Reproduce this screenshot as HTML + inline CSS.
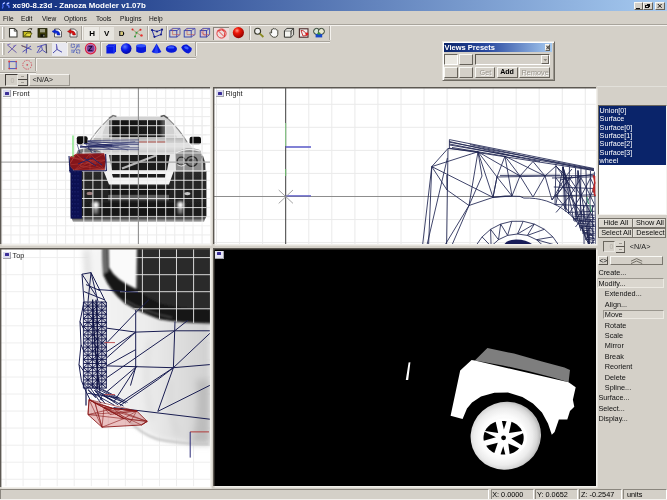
<!DOCTYPE html>
<html>
<head>
<meta charset="utf-8">
<title>Zanoza Modeler</title>
<style>
html,body{margin:0;padding:0;}
body{width:667px;height:500px;overflow:hidden;background:#d4d0c8;font-family:"Liberation Sans",sans-serif;font-size:7.4px;color:#000;position:relative;}
.abs{position:absolute;}
#title{left:0;top:0;width:667px;height:11.4px;background:linear-gradient(to right,#0d2a7c 0%,#a6caf0 100%);}
#title .t{left:12.4px;top:0.9px;color:#fff;font-weight:bold;font-size:7.9px;line-height:10px;white-space:nowrap;filter:blur(0.3px);}
#menu span{position:absolute;top:14px;line-height:9px;font-size:7.5px;color:#111;filter:blur(0.25px);transform:scaleX(0.88);transform-origin:0 0;white-space:nowrap;}
.vp{background:#fff;overflow:hidden;box-shadow:1.6px 1.6px 0 #f1efea;}
.vp:after{content:"";position:absolute;left:0;top:0;right:0;bottom:0;box-shadow:inset 1.4px 1.4px 0 #5c5852;pointer-events:none;}
.vplabel{position:absolute;left:12.6px;top:2.2px;font-size:7.3px;line-height:9px;color:#222;filter:blur(0.25px);}
.vpicon{position:absolute;left:3px;top:3.2px;width:8px;height:7px;box-sizing:border-box;background:#dcdcee;border-right:1px solid #a4a4ac;border-bottom:1px solid #a4a4ac;}
.vpicon:after{content:"";position:absolute;left:2.2px;top:1.8px;width:4px;height:2.6px;background:#3a2e98;border-radius:0.5px;}

.grip{width:1px;background:#fff;box-shadow:1.5px 0 0 #a8a49c;}
.vsep{width:1px;background:#a8a49c;box-shadow:1px 0 0 #f4f2ee;}

.sunk{box-sizing:border-box;border:1px solid;border-color:#6e6a64 #fff #fff #6e6a64;}
.rais{box-sizing:border-box;border:1px solid;border-color:#fff #5a5650 #5a5650 #fff;background:#d4d0c8;}
.btn{box-sizing:border-box;border:1px solid;border-color:#f8f8f4 #66625a #66625a #f8f8f4;background:#d4d0c8;text-align:center;font-size:7.2px;line-height:7px;white-space:nowrap;overflow:hidden;}
.btn2{box-sizing:border-box;border:1px solid #77736b;background:#dbd7cf;box-shadow:inset 0.6px 0.6px 0 #eceae4;}
.tx{position:absolute;white-space:nowrap;font-size:7.3px;line-height:9px;filter:blur(0.25px);}
</style>
</head>
<body>
<!-- title bar -->
<div id="title" class="abs"><div class="t abs">xc90-8.z3d - Zanoza Modeler v1.07b</div></div>
<!-- menu -->
<div id="menu">
<span style="left:3.4px">File</span><span style="left:21.4px">Edit</span><span style="left:41.8px">View</span><span style="left:63.6px">Options</span><span style="left:96px">Tools</span><span style="left:119.6px">Plugins</span><span style="left:148.8px">Help</span>
</div>


<!-- separators / etched lines -->
<div class="abs" style="left:0;top:24px;width:667px;height:1px;background:#a8a49c;"></div>
<div class="abs" style="left:0;top:25px;width:667px;height:1px;background:#f4f2ee;"></div>
<div class="abs" style="left:0;top:40.5px;width:330px;height:1px;background:#a8a49c;"></div>
<div class="abs" style="left:0;top:41.5px;width:330px;height:1px;background:#f4f2ee;"></div>
<div class="abs" style="left:0;top:56.5px;width:196px;height:1px;background:#a8a49c;"></div>
<div class="abs" style="left:0;top:57.5px;width:196px;height:1px;background:#f4f2ee;"></div>
<div class="abs" style="left:0;top:71.5px;width:36px;height:1px;background:#a8a49c;"></div>
<div class="abs" style="left:0;top:72.5px;width:36px;height:1px;background:#f4f2ee;"></div>
<!-- grips -->
<div class="grip abs" style="left:1.5px;top:27px;height:12px;"></div>
<div class="grip abs" style="left:1.5px;top:43px;height:12px;"></div>
<div class="grip abs" style="left:1.5px;top:59px;height:11px;"></div>
<!-- vertical toolbar separators row1 -->
<div class="vsep abs" style="left:81px;top:26px;height:14px;"></div>
<div class="vsep abs" style="left:147px;top:26px;height:14px;"></div>
<div class="vsep abs" style="left:166px;top:26px;height:14px;"></div>
<div class="vsep abs" style="left:248.5px;top:26px;height:14px;"></div>
<div class="vsep abs" style="left:328.5px;top:26px;height:14px;"></div>
<div class="vsep abs" style="left:66px;top:42px;height:14px;"></div>
<div class="vsep abs" style="left:100px;top:42px;height:14px;"></div>
<div class="vsep abs" style="left:195px;top:42px;height:14px;"></div>
<div class="vsep abs" style="left:35px;top:58px;height:13px;"></div>
<!-- pressed button backgrounds -->
<div class="abs" style="left:84px;top:26.5px;width:15px;height:13.5px;background:#ebe9e4;"></div>
<div class="abs" style="left:99.5px;top:26.5px;width:14.5px;height:13.5px;background:#e6e4de;"></div>
<div class="abs" style="left:213px;top:26.5px;width:16px;height:13.5px;background:#ecdcdc;border-left:1px solid #8a867e;border-top:1px solid #8a867e;box-sizing:border-box;"></div>
<div class="abs" style="left:52px;top:43px;width:15px;height:12.5px;background:#e8e8f0;"></div>


<svg class="abs" style="left:0;top:0;filter:blur(0.35px);" width="667" height="90" viewBox="0 0 667 90">
<defs>
<radialGradient id="rb" cx="0.38" cy="0.32" r="0.7"><stop offset="0" stop-color="#ff9a8a"/><stop offset="0.35" stop-color="#f01808"/><stop offset="1" stop-color="#900000"/></radialGradient>
<radialGradient id="bb" cx="0.38" cy="0.32" r="0.7"><stop offset="0" stop-color="#5a78ff"/><stop offset="0.5" stop-color="#0818e8"/><stop offset="1" stop-color="#0408a0"/></radialGradient>
</defs>
<!-- app icon -->
<g fill="none" stroke-linecap="round"><path d="M4.6 3 Q2.4 3.4 2.8 5.2 Q3.6 6.4 2.4 8" stroke="#4a6cf0" stroke-width="1.3"/><path d="M9 3 Q6.6 3 7 4.8 Q9.4 5.6 9 7.4" stroke="#5a7cf8" stroke-width="1.4"/><path d="M4.4 3 L3.4 3.6 M8.6 3.2 L7.4 3.8" stroke="#e8ecff" stroke-width="1"/></g>
<!-- new -->
<path d="M9.5 28.5 H14.5 L17 31 V37 H9.5 Z" fill="#fff" stroke="#3a3a34" stroke-width="1.1"/>
<path d="M14.3 28.7 V31.2 H16.8" fill="none" stroke="#3a3a34" stroke-width="0.8"/>
<!-- open -->
<path d="M23.2 31.5 H30.5 V37 H23.2 Z" fill="#c8c020" stroke="#3a3a10" stroke-width="1.1"/>
<path d="M24.5 36 L27 33 H32 L30 36.6 Z" fill="#e8e040" stroke="#4a4a10" stroke-width="0.8"/>
<path d="M27.5 30 Q29.5 28 31.5 28.6 M31.8 28.2 L31.2 30.2" fill="none" stroke="#3a3a30" stroke-width="0.9"/>
<!-- save -->
<rect x="38" y="28.6" width="9" height="8.6" fill="#3a3a08" stroke="#1c1c04" stroke-width="0.8"/>
<rect x="40" y="29" width="5" height="3.4" fill="#9a9a80"/>
<rect x="40.4" y="34.2" width="4.4" height="3" fill="#101008"/>
<rect x="43.4" y="34.8" width="1" height="1.8" fill="#b0b0a0"/>
<!-- import (blue) -->
<path d="M54.5 29 H59 L61.5 31.5 V37 H54.5 Z" fill="#f4f4f4" stroke="#505050" stroke-width="0.9"/>
<path d="M52 31.4 L55.5 29.6 L55.5 30.8 Q59.5 30.6 60 35 L57.2 35 Q57 32.6 55.5 32.6 L55.5 33.6 Z" fill="#0828d8" stroke="#0818a0" stroke-width="0.5"/>
<!-- export (red) -->
<path d="M70 29 H74.5 L77 31.5 V37 H70 Z" fill="#f4f4f4" stroke="#505050" stroke-width="0.9"/>
<path d="M67.5 31.4 L71 29.6 L71 30.8 Q75 30.6 75.5 35 L72.8 35 Q72.6 32.6 71 32.6 L71 33.6 Z" fill="#d81010" stroke="#900808" stroke-width="0.5"/>
<!-- H V D -->
<text x="89.2" y="36.2" font-family="Liberation Sans" font-weight="bold" font-size="8" fill="#000">H</text>
<text x="104" y="36.2" font-family="Liberation Sans" font-weight="bold" font-size="8" fill="#000">V</text>
<text x="118.8" y="36.2" font-family="Liberation Sans" font-weight="bold" font-size="8" fill="#000">D</text><path d="M120.6 31.6 V35 H122.4 Q123.4 33.4 122.4 31.6 Z" fill="#d8c870"/>

<!-- vertices icon -->
<g fill="none" stroke-width="0.9"><path d="M132.5 29.5 L136.5 32.5 L140.5 29.5 M136.5 32.5 L135 37 M136.5 32.5 L141.5 36" stroke="#a89068"/>
<circle cx="132.5" cy="29.5" r="1" fill="#e02020" stroke="none"/><circle cx="140.5" cy="29.8" r="1" fill="#e02020" stroke="none"/><circle cx="136.5" cy="32.8" r="1" fill="#30a040" stroke="none"/><circle cx="135" cy="36.6" r="1" fill="#30a040" stroke="none"/><circle cx="141.5" cy="35.4" r="1.2" fill="#e83030" stroke="none"/></g>
<!-- polygon icon -->
<g fill="none" stroke="#2830a8" stroke-width="1"><path d="M152 30 L157 31.5 L162 29.5 L161 34.5 L154.5 37 Z"/></g>
<g fill="#101880"><circle cx="152" cy="30" r="1.1"/><circle cx="157" cy="31.5" r="1"/><circle cx="162" cy="29.6" r="1.1"/><circle cx="161" cy="34.5" r="1"/><circle cx="154.5" cy="36.8" r="1.1"/></g>
<!-- cubes -->
<g fill="none" stroke-width="0.9">
<rect x="169.8" y="30.6" width="7" height="6.4" stroke="#2838b0"/><path d="M169.8 30.6 L172.6 28.4 H180 V34.6 L176.8 37 M176.8 30.6 L180 28.4" stroke="#5050b0"/><path d="M172.6 28.6 V34.6 H179.8" stroke="#c05050" stroke-width="0.6"/>
<rect x="184.2" y="30.6" width="7" height="6.4" stroke="#2838b0"/><path d="M184.2 30.6 L187 28.4 H195 V34.6 L191.2 37 M191.2 30.6 L195 28.4" stroke="#5050b0"/><path d="M187 28.6 V34.6 H194.8" stroke="#c05050" stroke-width="0.6"/>
<rect x="200.2" y="30.6" width="6.4" height="6.4" stroke="#2838b0" fill="#d8c0c8"/><path d="M200.2 30.6 L203 28.4 H209.6 V34.6 L206.6 37 M206.6 30.6 L209.6 28.4" stroke="#4848b0"/><path d="M203 28.6 V34.6 H209.4 M201 31.5 L206 36.5" stroke="#c05050" stroke-width="0.6"/>
</g>
<!-- pressed red wire sphere -->
<g fill="none" stroke="#e03030" stroke-width="0.9"><circle cx="221.5" cy="33.5" r="4.6"/><path d="M217.5 31 Q222 28.5 225.5 31.5 M218 30.5 L224.5 37 M222 29 Q226 32 224.5 37"/></g>
<!-- red ball -->
<circle cx="238.4" cy="32.6" r="5.6" fill="url(#rb)"/>
<!-- zoom -->
<circle cx="257.6" cy="31.2" r="3" fill="#f0f0f0" stroke="#38382c" stroke-width="1.1"/>
<path d="M259.8 33.6 L263.4 37" stroke="#8a8a20" stroke-width="1.8"/>
<!-- hand -->
<path d="M270.5 32 L271.6 33 L271.6 29.6 Q272.2 28.8 272.8 29.6 L273 28.8 Q273.8 28 274.4 28.8 L274.8 29 Q275.6 28.4 276.2 29.4 L276.4 30 Q277.4 29.6 277.8 30.6 V34.4 Q277.4 37 275.4 37.2 H273.4 Q271.6 36.8 270.2 34.2 Q269.4 32.6 270.5 32 Z" fill="#fafafa" stroke="#38382c" stroke-width="0.9"/>
<!-- cube -->
<path d="M284.4 30.8 H291 V37.2 H284.4 Z" fill="#f4f4f0" stroke="#30302c" stroke-width="1"/>
<path d="M284.4 30.8 L287 28.4 H293.6 L291 30.8 M293.6 28.4 V34.8 L291 37.2" fill="#e0e0dc" stroke="#30302c" stroke-width="0.9"/>
<!-- icon a -->
<rect x="299.4" y="28.8" width="8.6" height="8.4" fill="#f2eeee" stroke="#4a2a2a" stroke-width="1.1"/>
<path d="M301 30.5 Q305 30 306.6 35.5 M301 30.5 L303 36 L306.6 35.5" fill="none" stroke="#c02020" stroke-width="0.9"/>
<circle cx="307" cy="34" r="1.4" fill="#e01818"/>
<!-- icon b -->
<circle cx="316.6" cy="31.4" r="3" fill="#d8e8d8" stroke="#283828" stroke-width="1"/>
<circle cx="321.4" cy="31.4" r="3" fill="#e8e8d0" stroke="#283828" stroke-width="1"/>
<rect x="315.6" y="34" width="6.6" height="3.4" fill="#1848c8"/>
<rect x="317.6" y="32.6" width="2.6" height="2" fill="#389838"/>

<!-- ROW 2 -->
<g fill="none" stroke-width="0.95">
<path d="M7.5 45 L16.5 52.6 M16 45 L8 52.8" stroke="#6858a8"/><path d="M7.2 45 L10.5 43.8 M13 46.4 L16.4 45" stroke="#8070c0"/>
<path d="M21.5 45.6 L31.5 49.6 M27 44 L26.2 53.4 M22.5 52 L31 46" stroke="#4848b0"/><path d="M21.5 45.6 L26.5 47.6" stroke="#806050"/>
<path d="M37 47 L46.2 44.2 L46.6 53 L42.4 50 M37 53 L41.4 45.6 L42.4 50 L38.6 52.6" stroke="#5050b8"/><path d="M46.2 44.2 L46.6 53" stroke="#505058" stroke-width="1.1"/>
<path d="M56.4 44 L57 49.4 L53 53 M57 49.4 L62 52.2" stroke="#4040a8"/><path d="M56.4 44 L57 49.4" stroke="#7068c0"/>
</g>
<!-- % icon -->
<g stroke-width="0.9" fill="none"><path d="M78.6 44.4 L73 53" stroke="#5060b8"/>
<rect x="71.2" y="44.2" width="3.2" height="3.2" stroke="#3848b0" stroke-dasharray="1 0.6"/><rect x="76.6" y="49.8" width="3.2" height="3.2" stroke="#3848b0" stroke-dasharray="1 0.6"/>
<path d="M76 45 H80 M76 46.8 H80 M71 50.2 H74.4 M71 52 H74.4" stroke="#6878c8"/></g>
<!-- Z -->
<circle cx="90.6" cy="48.6" r="5.2" fill="#e8b0c0" stroke="#d82048" stroke-width="1.2"/>
<circle cx="90.6" cy="48.6" r="4" fill="#6a2a92" opacity="0.85"/>
<text x="88" y="51.4" font-family="Liberation Sans" font-weight="bold" font-size="7.6" fill="#100828">Z</text>
<!-- blue box -->
<path d="M106.4 46.2 L108.4 44.2 H116 V51.4 L114 53.4 H106.4 Z" fill="#0818e0"/>
<path d="M106.4 46.2 H114 V53.4 M114 46.2 L116 44.2" fill="none" stroke="#3858ff" stroke-width="0.7"/>
<!-- sphere -->
<circle cx="126.2" cy="48.6" r="5.3" fill="url(#bb)"/>
<!-- cylinder -->
<path d="M136.2 46 V51.6 Q141 54.6 146 51.6 V46 Z" fill="#0818d8"/>
<ellipse cx="141.1" cy="45.8" rx="4.9" ry="1.7" fill="#3050f8"/>
<!-- cone -->
<path d="M156.6 43.4 L161.4 52 Q156.6 54.6 151.6 52 Z" fill="#0a1ce0"/>
<path d="M156.6 43.4 L158.4 53 Q156 53.6 154 53 Z" fill="#3858ff" opacity="0.6"/>
<!-- torus-ish -->
<ellipse cx="171.4" cy="49" rx="5.6" ry="3.8" fill="#0818d8"/>
<ellipse cx="171" cy="47.4" rx="3.4" ry="1.2" fill="#3a5cff"/>
<!-- blob -->
<path d="M181.2 47.6 Q183 44 187 44.6 L191.6 48 Q192.4 51.4 188.6 53.4 Q184.4 53.6 181.2 47.6 Z" fill="#0818d8"/>
<ellipse cx="186.4" cy="47.8" rx="2.4" ry="1.3" fill="#4060ff" transform="rotate(25 186.4 47.8)"/>

<!-- ROW 3 -->
<rect x="9.2" y="61.6" width="7" height="7" fill="none" stroke="#4858c0" stroke-width="1"/>
<g fill="#e04040"><circle cx="9.2" cy="61.4" r="1"/><circle cx="16.2" cy="61.6" r="0.8"/><circle cx="9.2" cy="68.6" r="0.8"/><circle cx="16.2" cy="68.6" r="0.8"/></g>
<circle cx="27.2" cy="64.8" r="4.4" fill="none" stroke="#d04858" stroke-width="0.9" stroke-dasharray="1.4 1"/>
<circle cx="27.2" cy="64.8" r="0.9" fill="#d04858"/>
</svg>



<!-- window buttons -->
<div class="abs btn" style="left:633.5px;top:2px;width:9.5px;height:8px;"></div>
<div class="abs" style="left:636px;top:7.6px;width:3.6px;height:0.9px;background:#111;"></div>
<div class="abs btn" style="left:643px;top:2px;width:9.5px;height:8px;"></div>
<div class="abs" style="left:646.6px;top:3.6px;width:3.6px;height:3px;border:0.6px solid #111;border-top-width:1.1px;box-sizing:border-box;"></div>
<div class="abs" style="left:645.2px;top:5.4px;width:3.6px;height:3px;border:0.6px solid #111;border-top-width:1.1px;box-sizing:border-box;background:#d4d0c8;"></div>
<div class="abs btn" style="left:655px;top:2px;width:9.5px;height:8px;"></div>
<svg class="abs" style="left:655px;top:2px" width="10" height="8"><path d="M2.8 2 L6.6 5.8 M6.6 2 L2.8 5.8" stroke="#111" stroke-width="1"/></svg>

<!-- spinner row -->
<div class="abs" style="left:4.5px;top:74px;width:13px;height:11.5px;box-sizing:border-box;border:1px solid;border-color:#403c38 #e8e6e0 #e8e6e0 #403c38;background:#d4d0c8;"></div>
<div class="tx" style="left:10.5px;top:75.5px;color:#b8b4ac;font-size:7px;">0</div>
<div class="abs" style="left:17.5px;top:74px;width:10.5px;height:11.5px;background:#d8d4cc;border-right:1px solid #505050;box-sizing:border-box;"></div>
<div class="abs" style="left:18px;top:79.2px;width:9.5px;height:1px;background:#484440;"></div>
<div class="abs" style="left:18px;top:84.6px;width:9.5px;height:1px;background:#484440;"></div>
<div class="abs" style="left:21.4px;top:76.3px;width:3px;height:1px;background:#a09c94;"></div>
<div class="abs" style="left:21.4px;top:81.8px;width:3px;height:1px;background:#a09c94;"></div>
<div class="abs" style="left:29px;top:74px;width:41px;height:11.5px;box-sizing:border-box;border:1px solid;border-color:#f4f2ee #9a968e #9a968e #f4f2ee;"></div>
<div class="tx" style="left:32.4px;top:75.4px;color:#222;">&lt;N/A&gt;</div>

<!-- Views Presets floating toolbar -->
<div class="abs" style="left:442px;top:40.5px;width:112.5px;height:40.5px;box-sizing:border-box;border:1px solid;border-color:#e8e6e0 #6e6a62 #6e6a62 #e8e6e0;background:#d4d0c8;box-shadow:inset 1px 1px 0 #fff,inset -1px -1px 0 #9a968e;"></div>
<div class="abs" style="left:444px;top:43.4px;width:108px;height:8.8px;background:linear-gradient(to right,#0a246a,#2a4aa0 40%,#a6caf0);"></div>
<div class="tx" style="left:444.6px;top:43.2px;color:#fff;font-weight:bold;font-size:7.5px;">Views Presets</div>
<div class="abs btn" style="left:544.6px;top:44.2px;width:5.6px;height:7px;border-width:0.6px;"></div>
<svg class="abs" style="left:544.6px;top:44.2px" width="6" height="7"><path d="M1.4 1.8 L4.4 5.2 M4.4 1.8 L1.4 5.2" stroke="#222" stroke-width="0.9"/></svg>
<div class="abs" style="left:444.4px;top:53.6px;width:14px;height:11.6px;box-sizing:border-box;border:1px solid;border-color:#6a665e #fff #fff #6a665e;background:#ebe9e3;"></div>
<div class="abs btn" style="left:459.4px;top:53.6px;width:14px;height:11.6px;"></div>
<div class="abs" style="left:475.2px;top:53.6px;width:75px;height:11.6px;box-sizing:border-box;border:1px solid;border-color:#5a564e #fff #fff #5a564e;background:#d4d0c8;"></div>
<div class="abs btn" style="left:540.6px;top:54.8px;width:8.6px;height:9.4px;"></div>
<svg class="abs" style="left:540.6px;top:54.8px" width="9" height="10"><path d="M2.4 4 H6.2 L4.3 6.2 Z" fill="#8a867e"/></svg>
<div class="abs btn" style="left:444.4px;top:66.8px;width:14px;height:11.4px;"></div>
<div class="abs btn" style="left:459.4px;top:66.8px;width:14px;height:11.4px;"></div>
<div class="abs btn" style="left:475.2px;top:66.8px;width:20px;height:11.4px;"></div>
<div class="abs btn" style="left:496.8px;top:66.8px;width:20.8px;height:11.4px;"></div>
<div class="abs btn" style="left:519.2px;top:66.8px;width:31px;height:11.4px;"></div>
<div class="tx" style="left:479.6px;top:68.2px;color:#9a968e;text-shadow:0.6px 0.6px 0 #fff;">Get</div>
<div class="tx" style="left:500.2px;top:68.2px;color:#000;font-weight:bold;font-size:7.1px;letter-spacing:-0.1px;">Add</div>
<div class="tx" style="left:521.6px;top:68.2px;color:#9a968e;text-shadow:0.6px 0.6px 0 #fff;">Remove</div>

<div class="abs" style="left:597.4px;top:86.4px;width:70px;height:1px;background:#e2e0da;"></div>
<!-- status bar -->
<div class="abs" style="left:0;top:498.6px;width:667px;height:1.4px;background:#f2f0ec;z-index:3;"></div>
<div class="abs sunk" style="left:0;top:489.4px;width:489px;height:11px;border-color:#8a867e #fff #fff #8a867e;"></div>
<div class="abs sunk" style="left:490.6px;top:489.4px;width:43px;height:11px;border-color:#8a867e #fff #fff #8a867e;"></div>
<div class="abs sunk" style="left:535px;top:489.4px;width:43px;height:11px;border-color:#8a867e #fff #fff #8a867e;"></div>
<div class="abs sunk" style="left:579.4px;top:489.4px;width:42.4px;height:11px;border-color:#8a867e #fff #fff #8a867e;"></div>
<div class="abs sunk" style="left:623.4px;top:489.4px;width:43.6px;height:11px;border-color:#8a867e #fff #fff #8a867e;"></div>
<div class="tx" style="left:492.2px;top:490.4px;">X: 0.0000</div>
<div class="tx" style="left:537px;top:490.4px;">Y: 0.0652</div>
<div class="tx" style="left:581px;top:490.4px;">Z: -0.2547</div>
<div class="tx" style="left:627px;top:490.4px;">units</div>

<div class="abs" style="left:598px;top:104.5px;width:68.5px;height:110.5px;background:#fff;box-sizing:border-box;border:1px solid;border-color:#6a665e #f4f2ee #f4f2ee #6a665e;"></div>
<div class="abs" style="left:599px;top:105.5px;width:66.6px;height:59.6px;background:#0a246a;"></div>
<div class="tx" style="left:599.6px;top:105.60px;color:#fff;font-size:7.2px;">Union[0]</div>
<div class="tx" style="left:599.6px;top:114.05px;color:#fff;font-size:7.2px;">Surface</div>
<div class="tx" style="left:599.6px;top:122.50px;color:#fff;font-size:7.2px;">Surface[0]</div>
<div class="tx" style="left:599.6px;top:130.95px;color:#fff;font-size:7.2px;">Surface[1]</div>
<div class="tx" style="left:599.6px;top:139.40px;color:#fff;font-size:7.2px;">Surface[2]</div>
<div class="tx" style="left:599.6px;top:147.85px;color:#fff;font-size:7.2px;">Surface[3]</div>
<div class="tx" style="left:599.6px;top:156.30px;color:#fff;font-size:7.2px;">wheel</div>
<div class="abs btn2" style="left:598px;top:217.6px;width:34.6px;height:10.2px;"></div><div class="tx" style="left:603.4px;top:218.2px;color:#111;">Hide All</div>
<div class="abs btn2" style="left:632.4px;top:217.6px;width:33.2px;height:10.2px;"></div><div class="tx" style="left:636px;top:218.2px;color:#111;">Show All</div>
<div class="abs btn2" style="left:598px;top:227.6px;width:34.6px;height:10.2px;"></div><div class="tx" style="left:601.2px;top:228.2px;color:#111;">Select All</div>
<div class="abs btn2" style="left:632.4px;top:227.6px;width:33.2px;height:10.2px;"></div><div class="tx" style="left:636.2px;top:228.2px;color:#111;">Deselect</div>
<div class="abs" style="left:602.6px;top:240.6px;width:12.6px;height:11.8px;box-sizing:border-box;border:1px solid;border-color:#6a665e #e8e6e0 #e8e6e0 #6a665e;background:#d4d0c8;"></div>
<div class="tx" style="left:609.4px;top:242px;color:#b4b0a8;font-size:7px;">0</div>
<div class="abs" style="left:615.4px;top:240.6px;width:9.4px;height:11.8px;background:#dcd8d0;border-right:1px solid #6a665e;box-sizing:border-box;"></div>
<div class="abs" style="left:616px;top:246px;width:8.6px;height:1px;background:#5a5650;"></div>
<div class="abs" style="left:616px;top:251.6px;width:8.6px;height:1px;background:#5a5650;"></div>
<div class="abs" style="left:619px;top:243.2px;width:2.6px;height:1px;background:#a09c94;"></div>
<div class="abs" style="left:619px;top:248.8px;width:2.6px;height:1px;background:#a09c94;"></div>
<div class="tx" style="left:629.8px;top:242.4px;color:#222;">&lt;N/A&gt;</div>
<div class="abs btn" style="left:598px;top:256px;width:9.8px;height:9.4px;border-color:#f8f8f4 #58544c #58544c #f8f8f4;"></div>
<div class="tx" style="left:599.4px;top:256.2px;font-size:6.6px;color:#111;">&lt;&gt;</div>
<div class="abs btn" style="left:610.2px;top:256px;width:52.8px;height:9.4px;border-color:#f8f8f4 #7a766e #7a766e #f8f8f4;"></div>
<svg class="abs" style="left:628px;top:257px" width="18" height="8"><path d="M3 4.2 L8.6 1.6 L14.2 4.2 M3 6.6 L8.6 4 L14.2 6.6" fill="none" stroke="#6a665e" stroke-width="0.9"/></svg>
<div class="abs" style="left:597.4px;top:278.4px;width:67px;height:9.8px;box-sizing:border-box;border:1px solid;border-color:#9a968e #ece9e2 #ece9e2 #9a968e;background:#dad6ce;"></div>
<div class="abs" style="left:603.4px;top:309.6px;width:61px;height:9.8px;box-sizing:border-box;border:1px solid;border-color:#9a968e #ece9e2 #ece9e2 #9a968e;background:#dad6ce;"></div>
<div class="tx" style="left:598.4px;top:268.40px;color:#111;">Create...</div>
<div class="tx" style="left:598.4px;top:278.82px;color:#111;">Modify...</div>
<div class="tx" style="left:604.8px;top:289.24px;color:#111;">Extended...</div>
<div class="tx" style="left:604.8px;top:299.66px;color:#111;">Align...</div>
<div class="tx" style="left:604.8px;top:310.08px;color:#111;">Move</div>
<div class="tx" style="left:604.8px;top:320.50px;color:#111;">Rotate</div>
<div class="tx" style="left:604.8px;top:330.92px;color:#111;">Scale</div>
<div class="tx" style="left:604.8px;top:341.34px;color:#111;">Mirror</div>
<div class="tx" style="left:604.8px;top:351.76px;color:#111;">Break</div>
<div class="tx" style="left:604.8px;top:362.18px;color:#111;">Reorient</div>
<div class="tx" style="left:604.8px;top:372.60px;color:#111;">Delete</div>
<div class="tx" style="left:604.8px;top:383.02px;color:#111;">Spline...</div>
<div class="tx" style="left:598.4px;top:393.44px;color:#111;">Surface...</div>
<div class="tx" style="left:598.4px;top:403.86px;color:#111;">Select...</div>
<div class="tx" style="left:598.4px;top:414.28px;color:#111;">Display...</div>


<!-- viewports -->
<div id="vpFront" class="abs vp" style="left:0px;top:87px;width:210px;height:157.4px;">
<svg width="210" height="157.4" viewBox="0 87 210 157.4" style="position:absolute;left:0;top:0;">
<defs>
<filter id="fb1" x="-5%" y="-5%" width="110%" height="110%"><feGaussianBlur stdDeviation="0.6"/></filter>
<filter id="fb2" x="-20%" y="-20%" width="140%" height="140%"><feGaussianBlur stdDeviation="1.6"/></filter>
<linearGradient id="hood" x1="0" y1="0" x2="0" y2="1"><stop offset="0" stop-color="#b8b8b8"/><stop offset="0.5" stop-color="#e4e4e4"/><stop offset="1" stop-color="#c4c4c4"/></linearGradient>
<linearGradient id="ws" x1="0" y1="0" x2="1" y2="0"><stop offset="0" stop-color="#5a5a5a"/><stop offset="0.08" stop-color="#161616"/><stop offset="0.9" stop-color="#1c1c1c"/><stop offset="1" stop-color="#707070"/></linearGradient>
<linearGradient id="lowb" x1="0" y1="0" x2="0" y2="1"><stop offset="0" stop-color="#2a2a2a"/><stop offset="0.85" stop-color="#1c1c1c"/><stop offset="1" stop-color="#4a4a4a"/></linearGradient>
<clipPath id="carclip"><path d="M82 120 H206.5 V222 H82 Z"/></clipPath>
</defs>
<path d="M1.9 87 V244.4 M11.0 87 V244.4 M20.1 87 V244.4 M29.2 87 V244.4 M38.3 87 V244.4 M47.4 87 V244.4 M56.5 87 V244.4 M65.6 87 V244.4 M74.7 87 V244.4 M83.8 87 V244.4 M92.9 87 V244.4 M102.0 87 V244.4 M111.1 87 V244.4 M120.2 87 V244.4 M129.3 87 V244.4 M147.5 87 V244.4 M156.6 87 V244.4 M165.7 87 V244.4 M174.8 87 V244.4 M183.9 87 V244.4 M193.0 87 V244.4 M202.1 87 V244.4 M0 89.3 H210 M0 98.4 H210 M0 107.5 H210 M0 116.6 H210 M0 125.7 H210 M0 134.8 H210 M0 143.9 H210 M0 153.0 H210 M0 171.2 H210 M0 180.3 H210 M0 189.4 H210 M0 198.5 H210 M0 207.6 H210 M0 216.7 H210 M0 225.8 H210 M0 234.9 H210 M0 244.0 H210" stroke="#ececec" stroke-width="1" fill="none"/>
<g filter="url(#fb1)"><path d="M73.8 221.8 L71.4 216.0 L71.4 171.0 L72.8 160.0 L77.8 150.0 L86.8 147.0 L91.8 142.0 L96.8 134.0 L104.8 123.0 L111.8 116.4 L138.8 116.0 L139.0 116.0 L166.0 116.4 L173.0 123.0 L181.0 134.0 L186.0 142.0 L191.0 147.0 L200.0 150.0 L205.0 160.0 L206.4 171.0 L206.4 216.0 L204.0 221.8 Z" fill="#e6e6e6"/><path d="M107 122 L112 117 H166 L171 122 L177 137.4 H101 Z" fill="#d2d2d2"/><rect x="109.2" y="120.2" width="56" height="17" fill="url(#ws)"/><path d="M94 138 H184 L192 147 L176 154 H102 L86 147 Z" fill="url(#hood)"/><path d="M139 142 H166" stroke="#b05048" stroke-width="1"/><path d="M175.4 153 Q186 145.4 200 150 L205.4 164 L204 170.4 H176 Z" fill="#8e8e8e"/><ellipse cx="181.4" cy="161.2" rx="4.2" ry="4" fill="#8a8a8a" stroke="#2c2c2c" stroke-width="1.3"/><path d="M177.6 164.6 Q181.4 167.4 185.6 164.4" stroke="#e8e8e8" stroke-width="1.1" fill="none"/><ellipse cx="191.8" cy="161.4" rx="5.4" ry="5" fill="#787878" stroke="#2a2a2a" stroke-width="1.4"/><ellipse cx="191.4" cy="160.6" rx="2.4" ry="1.8" fill="#3a3a3a"/><path d="M202 156 Q205 163 204.4 170" stroke="#3a3a3a" stroke-width="2" fill="none"/><path d="M176 153 Q187 147 200 151" stroke="#e8e8e8" stroke-width="1.4" fill="none"/><path d="M102.6 153 Q92 145.4 78 150 L72.6 164 L74 170.4 H102 Z" fill="#7a7a7a"/><path d="M109 154.6 H170 L167 170.4 H112 Z" fill="#1e1e1e"/><path d="M122 168.6 L156 155.6" stroke="#b8b8b8" stroke-width="2.2"/><path d="M109 154.2 H170" stroke="#e0e0e0" stroke-width="1.6"/><path d="M70.8 171 H206.4 V216 L204 221.8 H73 L70.8 216 Z" fill="url(#lowb)"/><path d="M103.4 170.4 H174 L169 184.6 H109 Z" fill="#f4f4f4"/><path d="M112 174 H166 L165 177.6 H113 Z" fill="#1a1a1a"/><path d="M108 186.6 H170 L169 194 H109 Z" fill="#141414"/><rect x="108" y="195" width="61" height="5.4" fill="#5c5c5c"/><rect x="100" y="203" width="77" height="12" fill="#151515"/><ellipse cx="89.6" cy="193.4" rx="3" ry="1.6" fill="#a08080"/><ellipse cx="187.4" cy="193.6" rx="3" ry="1.6" fill="#c8c8c8"/><rect x="189.6" y="136.8" width="11.4" height="7.4" rx="2" fill="#111"/><rect x="76.8" y="136.2" width="10.8" height="8" rx="2" fill="#111"/><path d="M160.6 116.6 L164 115.6 L168 118.4" stroke="#555" stroke-width="1.6" fill="none"/><path d="M116.4 116.6 L113 115.6 L109 118.4" stroke="#777" stroke-width="1.6" fill="none"/><path d="M168 118.6 Q180 130 187 142" stroke="#8a8a8a" stroke-width="1.2" fill="none"/><path d="M109 118.6 Q97 130 90 141" stroke="#9a9a9a" stroke-width="1.2" fill="none"/></g>
<g filter="url(#fb2)"><ellipse cx="95.8" cy="205" rx="3.2" ry="3.6" fill="#fff"/><ellipse cx="180.4" cy="205" rx="3.2" ry="3.6" fill="#fff"/><ellipse cx="95.8" cy="211" rx="2.6" ry="3" fill="#8a8a8a"/><ellipse cx="180.4" cy="211" rx="2.6" ry="3" fill="#8a8a8a"/></g>
<rect x="68" y="219.6" width="142" height="6" fill="#fff" opacity="0.55" filter="url(#fb2)"/>
<g clip-path="url(#carclip)"><path d="M74.7 116 V223 M83.8 116 V223 M92.9 116 V223 M102.0 116 V223 M111.1 116 V223 M120.2 116 V223 M129.3 116 V223 M138.4 116 V223 M147.5 116 V223 M156.6 116 V223 M165.7 116 V223 M174.8 116 V223 M183.9 116 V223 M193.0 116 V223 M202.1 116 V223 M70 116.6 H207 M70 125.7 H207 M70 134.8 H207 M70 143.9 H207 M70 153.0 H207 M70 162.1 H207 M70 171.2 H207 M70 180.3 H207 M70 189.4 H207 M70 198.5 H207 M70 207.6 H207 M70 216.7 H207" stroke="#ececec" stroke-width="0.95" fill="none" opacity="0.95"/></g>
<path d="M0 162.1 H210" stroke="#9a9a9a" stroke-width="1"/>
<path d="M138.4 87 V244.4" stroke="#8e8e8e" stroke-width="1.1"/>
<rect x="70.6" y="171" width="11.2" height="47.6" fill="#0c1052"/>
<path d="M72.4 171 V218 M75 171 V218 M78 171 V218" stroke="#2a3080" stroke-width="0.6" stroke-dasharray="1.6 2.4"/>
<rect x="69.6" y="162.6" width="3.4" height="10" fill="#10145a"/>
<path d="M87.6 141.4 L138.5 144.6 M80.0 147.0 L114.0 146.1 M87.6 141.4 L128.3 150.0 M84.0 143.4 L113.0 145.0 M80.0 147.0 L118.7 146.2 M80.0 147.0 L135.2 141.7 M84.0 143.4 L129.7 146.6 M80.0 147.0 L128.2 144.6 M84.0 143.4 L113.3 149.5 M88 140.6 L139 139.9 M88 142.2 L139 142.4 M88 145.6 L139 144.0 M88 147.6 L139 147.8 M88 149.3 L139 149.7 M77 144 L80 153 L74 156 L78 160 M86 144 L92 153 L104 154 M80 145 L96 152" stroke="#1c2260" stroke-width="0.7" fill="none" opacity="0.9"/>
<rect x="112" y="141" width="27" height="9" fill="#8890b8" opacity="0.22"/>
<path d="M70 157 L76 154 L104 153.6 L106 160 L104.6 169.6 L74 170.6 L69 165 Z" fill="#84151a"/>
<path d="M76 154 L84 161 M70 157 L84 161 M104 153.6 L74 170.6 M96 162 L69 165 M90 170 L104.6 169.6 M74 170.6 L84 161 M74 170.6 L104.6 169.6 M106 160 L104 153.6 M90 153.6 L80 166 M104 153.6 L76 154 M84 161 L106 160 M69 165 L74 170.6 M104.6 169.6 L80 166 M74 170.6 L106 160 M84 161 L76 154 M76 154 L69 165 M90 170 L90 153.6 M104.6 169.6 L90 153.6 M74 170.6 L90 170 M70 157 L96 162 M76 154 L69 165 M84 161 L104.6 169.6" stroke="#c04840" stroke-width="0.6" fill="none" opacity="0.7"/>
<path d="M84 158 L96 166 M78 164 L92 158 L102 165" stroke="#20246a" stroke-width="1" fill="none"/>
<path d="M69 156 L70 171 M105.6 154 L106.4 171 M69 170.8 H106" stroke="#181c5c" stroke-width="1.1" fill="none"/>
<path d="M73 135.6 V157" stroke="#6ee06e" stroke-width="1.2"/>
</svg>
<div class="vpicon"></div><div class="vplabel">Front</div>
</div>
<div id="vpRight" class="abs vp" style="left:213px;top:87px;width:382.7px;height:157.4px;">
<svg width="382.7" height="157.4" viewBox="213 87 382.7 157.4" style="position:absolute;left:0;top:0;">
<path d="M216.5 87 V244.4 M239.6 87 V244.4 M262.6 87 V244.4 M308.8 87 V244.4 M331.8 87 V244.4 M354.9 87 V244.4 M377.9 87 V244.4 M401.0 87 V244.4 M424.0 87 V244.4 M447.1 87 V244.4 M470.1 87 V244.4 M493.2 87 V244.4 M516.2 87 V244.4 M539.2 87 V244.4 M562.3 87 V244.4 M585.3 87 V244.4 M213 104.3 H595.7 M213 127.3 H595.7 M213 150.4 H595.7 M213 173.4 H595.7 M213 219.6 H595.7 M213 242.6 H595.7" stroke="#eaeaea" stroke-width="1" fill="none"/>
<path d="M213 196.5 H595.7" stroke="#8c8c8c" stroke-width="1"/>
<path d="M285.7 87 V244.4" stroke="#3c3c3c" stroke-width="1"/>
<path d="M285.7 123 V146" stroke="#90d890" stroke-width="1"/><path d="M285.7 169 V176" stroke="#70c870" stroke-width="1"/>
<path d="M285.7 147 H311 M285.7 195.8 H311" stroke="#5858c8" stroke-width="1.3"/>
<path d="M278.7 190 L293 203.4 M293 190 L278.7 203.4" stroke="#9a9a9a" stroke-width="0.9"/>
<path d="M449.4 139.6 L594.0 168.5 M449.4 142.2 L594.0 169.1 M449.4 145.0 L594.0 169.7 M449.4 148.2 L594.0 170.5 M449.4 144.0 L540.0 161.5 M470.0 144.6 L594.0 170.6 M449.4 139.6 L449.4 148.4 M449.4 141.5 L520.0 157.5 M452.0 147.5 L478.0 151.8 M431.8 166.6 L422.6 245.0 M431.8 166.6 L428.6 245.0 M448.0 148.5 L431.8 166.6 M448.0 148.5 L446.6 245.0 M447.4 158.0 L427.0 245.0 M431.8 166.6 L478.0 151.8 M448.0 148.5 L478.0 151.8 M431.8 166.6 L493.0 197.4 M478.0 151.8 L469.0 205.5 L445.0 245.0 M478.0 151.8 L493.0 197.4 M478.0 151.8 L482.0 176.0 L469.0 205.5 M431.8 166.6 L447.0 190.0 L469.0 205.5 M447.0 190.0 L446.8 175.0 M493.0 197.4 L469.0 205.5 M469.0 205.5 L452.0 245.0 M478.0 151.8 L505.0 156.2 M478.0 151.8 L497.0 177.0 L493.0 197.4 M505.0 156.2 L497.0 177.0 M505.0 156.2 L520.0 176.0 M520.0 176.0 L533.0 161.5 M533.0 161.5 L545.0 176.0 M545.0 176.0 L556.0 166.0 M556.0 166.0 L566.0 176.0 M566.0 176.0 L572.0 169.0 M497.0 177.0 L594.0 175.3 M500.0 175.4 L560.0 175.2 M505.0 156.2 L512.0 196.0 M520.0 176.0 L512.0 196.0 M520.0 176.0 L533.0 197.0 M545.0 176.0 L533.0 197.0 M545.0 176.0 L552.0 200.0 M566.0 176.0 L552.0 200.0 M566.0 176.0 L566.0 210.0 M497.0 177.0 L493.0 197.4 M497.0 177.0 L512.0 196.0 M493.0 197.4 L512.0 196.0 M478.0 151.8 L520.0 176.0 M505.0 156.2 L545.0 176.0 M493.0 197.4 L505.0 196.0 L520.0 196.4 L523.9 198.1 L529.7 198.1 L535.5 198.6 L541.2 199.6 L546.8 201.1 L552.2 203.2 L557.4 205.7 L562.4 208.7 L567.1 212.1 L571.5 216.0 L575.4 220.2 L579.0 224.7 L582.2 229.6 L584.9 234.8 L587.1 240.1 L588.9 245.7 L590.1 251.3 L590.8 257.1 M556.0 163.9 L555.0 204.9 M563.0 165.3 L564.5 209.1 M569.5 166.6 L568.5 214.1 M575.5 167.8 L577.0 220.2 M581.0 168.9 L580.0 227.6 M586.0 169.9 L587.5 237.2 M590.5 170.8 L589.5 245.0 M594.4 171.6 L595.9 245.0 M552.0 178.0 L594.6 176.8 M553.8 187.0 L594.6 188.5 M555.6 196.0 L594.6 194.8 M555.1 204.5 L594.6 206.0 M567.6 212.5 L594.6 211.3 M575.3 220.0 L594.6 221.5 M580.6 227.0 L594.6 225.8 M584.3 233.5 L594.6 235.0 M586.9 239.5 L594.6 238.3 M588.7 245.0 L594.6 246.5 M556.0 178.0 L563.0 187.0 M569.5 178.0 L563.0 187.0 M569.5 178.0 L575.5 187.0 M581.0 178.0 L575.5 187.0 M581.0 178.0 L586.0 187.0 M590.5 178.0 L586.0 187.0 M590.5 178.0 L594.4 187.0 M563.0 187.0 L556.0 196.0 M563.0 187.0 L569.5 196.0 M575.5 187.0 L569.5 196.0 M575.5 187.0 L581.0 196.0 M586.0 187.0 L581.0 196.0 M586.0 187.0 L590.5 196.0 M594.4 187.0 L590.5 196.0 M556.0 196.0 L563.0 204.5 M569.5 196.0 L563.0 204.5 M569.5 196.0 L575.5 204.5 M581.0 196.0 L575.5 204.5 M581.0 196.0 L586.0 204.5 M590.5 196.0 L586.0 204.5 M590.5 196.0 L594.4 204.5 M563.0 204.5 L556.0 212.5 M563.0 204.5 L569.5 212.5 M575.5 204.5 L569.5 212.5 M575.5 204.5 L581.0 212.5 M586.0 204.5 L581.0 212.5 M586.0 204.5 L590.5 212.5 M594.4 204.5 L590.5 212.5 M569.5 212.5 L575.5 220.0 M581.0 212.5 L575.5 220.0 M581.0 212.5 L586.0 220.0 M590.5 212.5 L586.0 220.0 M590.5 212.5 L594.4 220.0 M581.0 220.0 L575.5 227.0 M581.0 220.0 L586.0 227.0 M590.5 220.0 L586.0 227.0 M590.5 220.0 L594.4 227.0 M581.0 227.0 L586.0 233.5 M590.5 227.0 L586.0 233.5 M590.5 227.0 L594.4 233.5 M590.5 233.5 L586.0 239.5 M590.5 233.5 L594.4 239.5 M586.0 239.5 L590.5 245.0 M594.4 239.5 L590.5 245.0 M563.0 167.0 L556.0 204.0 M563.0 167.0 L566.0 212.0 M563.0 167.0 L574.0 221.0 M563.0 167.0 L581.0 231.0 M563.0 167.0 L586.0 240.0 M578.0 170.5 L575.0 222.0 M578.0 170.5 L583.0 234.0 M578.0 170.5 L589.0 245.0 M552.0 200.0 L572.0 176.0 M560.0 180.0 L594.0 174.0 M556.0 166.0 L575.0 192.0 M574.5 214.0 L594.6 215.2 M574.5 216.3 L594.6 217.5 M574.5 218.6 L594.6 219.8 M575.6 220.9 L594.6 222.1 M577.4 223.2 L594.6 224.4 M579.1 225.5 L594.6 226.7 M580.6 227.8 L594.6 229.0 M582.0 230.1 L594.6 231.3 M583.2 232.4 L594.6 233.6 M584.4 234.7 L594.6 235.9 M585.4 237.0 L594.6 238.2 M586.3 239.3 L594.6 240.5 M587.2 241.6 L594.6 242.8 M587.9 243.9 L594.6 245.1 M583.5 205.0 L584.1 245.0 M588.0 205.0 L588.6 245.0 M592.4 205.0 L593.0 245.0 M475.6 246.2 L482.1 236.9 L490.6 229.3 L500.7 224.1 L511.8 221.3 L523.2 221.3 L534.3 224.1 L544.4 229.3 L552.9 236.9 L559.4 246.2 M491.1 246.3 L498.5 239.7 L507.6 235.4 L517.5 234.0 L527.4 235.4 L536.5 239.7 L543.9 246.3 M491.1 246.3 L482.1 236.9 M491.1 246.3 L490.6 229.3 M498.5 239.7 L490.6 229.3 M498.5 239.7 L500.7 224.1 M507.6 235.4 L500.7 224.1 M507.6 235.4 L511.8 221.3 M517.5 234.0 L523.2 221.3 M517.5 234.0 L534.3 224.1 M527.4 235.4 L534.3 224.1 M527.4 235.4 L544.4 229.3 M536.5 239.7 L552.9 236.9 M536.5 239.7 L559.4 246.2 M543.9 246.3 L559.4 246.2" stroke="#1e2350" stroke-width="0.85" fill="none" stroke-linejoin="round"/>
<path d="M504 245 Q506 240 516 239.4 Q528 239.6 533 245 Z" fill="#181c58"/>
<path d="M593.4 175 L595 183 L593 190 L595.4 196 M594.6 176 V196" stroke="#b82828" stroke-width="1.4" fill="none"/>
<path d="M587 197 L588.6 204 M590 205 L591.4 212" stroke="#3c9a6c" stroke-width="1" fill="none"/>
</svg>
<div class="vpicon"></div><div class="vplabel">Right</div>
</div>
<div id="vpTop" class="abs vp" style="left:0px;top:248.4px;width:210px;height:238.2px;">
<svg width="210" height="238.2" viewBox="0 248.4 210 238.2" style="position:absolute;left:0;top:0;">
<defs>
<filter id="tb1" x="-5%" y="-5%" width="110%" height="110%"><feGaussianBlur stdDeviation="1.1"/></filter>
<filter id="tb2" x="-20%" y="-20%" width="140%" height="140%"><feGaussianBlur stdDeviation="3"/></filter>
<linearGradient id="tbody" x1="0" y1="0" x2="1" y2="0"><stop offset="0" stop-color="#f6f6f6"/><stop offset="0.5" stop-color="#ececec"/><stop offset="1" stop-color="#cfcfcf"/></linearGradient>
<clipPath id="tdark"><path d="M102 248 L103 275 Q110 292 125 304 Q140 313 160 320 Q180 323.6 211 324 V248 Z"/></clipPath>
</defs>
<path d="M6.0 248.4 V486.6 M23.1 248.4 V486.6 M40.1 248.4 V486.6 M57.2 248.4 V486.6 M74.2 248.4 V486.6 M91.3 248.4 V486.6 M108.3 248.4 V486.6 M125.4 248.4 V486.6 M142.4 248.4 V486.6 M159.5 248.4 V486.6 M176.5 248.4 V486.6 M193.6 248.4 V486.6 M0 258.0 H210 M0 275.1 H210 M0 292.1 H210 M0 309.2 H210 M0 326.2 H210 M0 343.3 H210 M0 360.3 H210 M0 377.4 H210 M0 394.4 H210 M0 411.5 H210 M0 428.5 H210 M0 445.6 H210 M0 462.6 H210 M0 479.7 H210" stroke="#eeeeee" stroke-width="1" fill="none"/>
<g filter="url(#tb2)"><path d="M84 248 H211 V445 Q186 445 160 440 Q138 432 122 412 Q104 390 96 350 Q86 300 84 248 Z" fill="url(#tbody)"/><path d="M196 380 H211 V445 H190 Q200 420 196 380 Z" fill="#bdbdbd"/><path d="M150 340 Q142 380 152 420 M170 380 Q168 410 178 436" stroke="#c4c4c4" stroke-width="1.6" fill="none"/><path d="M86 250 Q88 300 98 346" stroke="#c0c0c0" stroke-width="3" fill="none"/></g>
<path d="M128 420 Q140 434 157.7 439.6 Q180 444.6 209 444.4" stroke="#c2c2c2" stroke-width="2" fill="none" filter="url(#tb1)"/>
<g filter="url(#tb1)"><path d="M102 248 L103 275 Q110 292 125 304 Q140 313 160 320 Q180 323.6 211 324 V248 Z" fill="#141414"/><path d="M102 248 L103 275 L108 272 L107.4 248 Z" fill="#6a6a6a"/><path d="M137 248 H211 V310 Q180 309 160 304 Q146 298 137 289 Z" fill="#2b2b2b"/></g>
<path d="M124 300 Q145 313 172 318" stroke="#5a5a5a" stroke-width="1.2" fill="none" filter="url(#tb1)"/>
<g clip-path="url(#tdark)"><path d="M125.4 248 V326 M142.4 248 V326 M159.5 248 V326 M176.5 248 V326 M193.6 248 V326 M210.6 248 V326 M120 258.0 H211 M120 275.1 H211 M120 292.1 H211 M120 309.2 H211" stroke="#e2e2e2" stroke-width="1" fill="none" opacity="0.95"/></g>
<path d="M108.5 247 L109 268 Q116 281 136.4 289.4 L137 247 Z" fill="#fafafa" filter="url(#tb1)"/>
<path d="M107.0 328.6 L135.7 332.5 L174.7 331.2 L209.8 331.2 M135.7 310.4 L135.7 367.6 L130.5 386.0 M107.0 343.0 L135.7 313.0 L149.0 300.0 M107.0 378.0 L174.7 331.2 L188.0 320.6 M118.8 404.0 L173.4 368.1 L209.8 333.8 M107.0 366.3 L173.4 368.1 L209.8 365.0 M174.7 331.2 L173.4 368.1 M157.8 411.8 L173.4 368.1 M157.8 411.8 L209.8 385.8 M113.5 408.0 L209.8 419.6 M113.6 402.7 L137.0 366.3 M107.0 352.0 L135.7 332.5 M107.0 392.0 L135.7 367.6 M120.0 406.0 L157.8 380.0 L173.4 368.1 M135.7 332.5 L107.0 358.0 M135.7 350.0 L107.0 366.0 M98.0 290.0 L138.0 292.6 M174.7 331.2 L175.0 322.0 M82.0 274.6 L91.0 273.0 L100.4 291.6 L106.0 303.0 M82.0 274.6 L84.0 302.0 M91.0 273.0 L88.0 302.0 M82.0 274.6 L96.0 296.0 M91.0 273.0 L98.0 302.0 M86.0 285.0 L100.0 291.0 M84.0 292.0 L104.0 300.0 M84.0 302.0 L80.0 322.0 L81.0 345.0 L79.0 365.0 L81.4 381.0 L86.0 392.0 L90.0 400.0 M80.0 322.0 L84.0 330.0 M81.0 345.0 L84.0 352.0 M79.0 365.0 L84.0 372.0" stroke="#181c50" stroke-width="1" fill="none"/>
<rect x="83.4" y="302.4" width="23" height="86.4" fill="#232a66" opacity="0.16"/>
<path d="M83.4 302.4 V388.6 M88.0 302.4 V388.6 M92.6 302.4 V388.6 M97.2 302.4 V388.6 M101.8 302.4 V388.6 M106.4 302.4 V388.6 M83.4 302.4 H106.4 M83.4 306.5 H106.4 M83.4 310.6 H106.4 M83.4 314.7 H106.4 M83.4 318.8 H106.4 M83.4 322.9 H106.4 M83.4 327.0 H106.4 M83.4 331.1 H106.4 M83.4 335.2 H106.4 M83.4 339.3 H106.4 M83.4 343.4 H106.4 M83.4 347.5 H106.4 M83.4 351.6 H106.4 M83.4 355.7 H106.4 M83.4 359.8 H106.4 M83.4 363.9 H106.4 M83.4 368.0 H106.4 M83.4 372.1 H106.4 M83.4 376.2 H106.4 M83.4 380.3 H106.4 M83.4 384.4 H106.4 M83.4 388.5 H106.4 M83.4 302.4 L88.0 306.5 M92.6 302.4 L88.0 306.5 M92.6 302.4 L97.2 306.5 M101.8 302.4 L97.2 306.5 M101.8 302.4 L106.4 306.5 M88.0 306.5 L83.4 310.6 M88.0 306.5 L92.6 310.6 M97.2 306.5 L92.6 310.6 M97.2 306.5 L101.8 310.6 M106.4 306.5 L101.8 310.6 M83.4 310.6 L88.0 314.7 M92.6 310.6 L88.0 314.7 M92.6 310.6 L97.2 314.7 M101.8 310.6 L97.2 314.7 M101.8 310.6 L106.4 314.7 M88.0 314.7 L83.4 318.8 M88.0 314.7 L92.6 318.8 M97.2 314.7 L92.6 318.8 M97.2 314.7 L101.8 318.8 M106.4 314.7 L101.8 318.8 M83.4 318.8 L88.0 322.9 M92.6 318.8 L88.0 322.9 M92.6 318.8 L97.2 322.9 M101.8 318.8 L97.2 322.9 M101.8 318.8 L106.4 322.9 M88.0 322.9 L83.4 327.0 M88.0 322.9 L92.6 327.0 M97.2 322.9 L92.6 327.0 M97.2 322.9 L101.8 327.0 M106.4 322.9 L101.8 327.0 M83.4 327.0 L88.0 331.1 M92.6 327.0 L88.0 331.1 M92.6 327.0 L97.2 331.1 M101.8 327.0 L97.2 331.1 M101.8 327.0 L106.4 331.1 M88.0 331.1 L83.4 335.2 M88.0 331.1 L92.6 335.2 M97.2 331.1 L92.6 335.2 M97.2 331.1 L101.8 335.2 M106.4 331.1 L101.8 335.2 M83.4 335.2 L88.0 339.3 M92.6 335.2 L88.0 339.3 M92.6 335.2 L97.2 339.3 M101.8 335.2 L97.2 339.3 M101.8 335.2 L106.4 339.3 M88.0 339.3 L83.4 343.4 M88.0 339.3 L92.6 343.4 M97.2 339.3 L92.6 343.4 M97.2 339.3 L101.8 343.4 M106.4 339.3 L101.8 343.4 M83.4 343.4 L88.0 347.5 M92.6 343.4 L88.0 347.5 M92.6 343.4 L97.2 347.5 M101.8 343.4 L97.2 347.5 M101.8 343.4 L106.4 347.5 M88.0 347.5 L83.4 351.6 M88.0 347.5 L92.6 351.6 M97.2 347.5 L92.6 351.6 M97.2 347.5 L101.8 351.6 M106.4 347.5 L101.8 351.6 M83.4 351.6 L88.0 355.7 M92.6 351.6 L88.0 355.7 M92.6 351.6 L97.2 355.7 M101.8 351.6 L97.2 355.7 M101.8 351.6 L106.4 355.7 M88.0 355.7 L83.4 359.8 M88.0 355.7 L92.6 359.8 M97.2 355.7 L92.6 359.8 M97.2 355.7 L101.8 359.8 M106.4 355.7 L101.8 359.8 M83.4 359.8 L88.0 363.9 M92.6 359.8 L88.0 363.9 M92.6 359.8 L97.2 363.9 M101.8 359.8 L97.2 363.9 M101.8 359.8 L106.4 363.9 M88.0 363.9 L83.4 368.0 M88.0 363.9 L92.6 368.0 M97.2 363.9 L92.6 368.0 M97.2 363.9 L101.8 368.0 M106.4 363.9 L101.8 368.0 M83.4 368.0 L88.0 372.1 M92.6 368.0 L88.0 372.1 M92.6 368.0 L97.2 372.1 M101.8 368.0 L97.2 372.1 M101.8 368.0 L106.4 372.1 M88.0 372.1 L83.4 376.2 M88.0 372.1 L92.6 376.2 M97.2 372.1 L92.6 376.2 M97.2 372.1 L101.8 376.2 M106.4 372.1 L101.8 376.2 M83.4 376.2 L88.0 380.3 M92.6 376.2 L88.0 380.3 M92.6 376.2 L97.2 380.3 M101.8 376.2 L97.2 380.3 M101.8 376.2 L106.4 380.3 M88.0 380.3 L83.4 384.4 M88.0 380.3 L92.6 384.4 M97.2 380.3 L92.6 384.4 M97.2 380.3 L101.8 384.4 M106.4 380.3 L101.8 384.4 M83.4 384.4 L88.0 388.5 M92.6 384.4 L88.0 388.5 M92.6 384.4 L97.2 388.5 M101.8 384.4 L97.2 388.5 M101.8 384.4 L106.4 388.5" stroke="#10144a" stroke-width="0.9" fill="none"/>
<path d="M96 300 Q99 340 97 390 M92.6 300 Q94 350 100 392" stroke="#0e1244" stroke-width="1.3" fill="none"/>
<path d="M94.1 390.7 L125.9 403.6 M95.1 391.0 L105.2 404.1 M97.3 393.5 L102.6 401.6 M87.6 393.7 L119.4 398.5 M103.7 395.6 L118.3 405.4 M88.8 384.2 L114.8 398.7 M89.4 386.9 L100.8 403.6 M93.9 394.1 L114.5 405.7 M95.0 391.9 L112.8 401.3 M104.0 395.9 L123.5 406.5 M91.7 386.8 L108.1 398.8 M99.8 388.8 L123.7 402.6 M103.2 394.2 L100.0 400.5 M102.4 389.6 L127.5 402.8" stroke="#141a50" stroke-width="0.9" fill="none"/>
<path d="M86 388 V406 M88 390 L96 398" stroke="#141a50" stroke-width="1.2" fill="none"/>
<path d="M104.5 343 H115 M104.5 395 H115" stroke="#c04848" stroke-width="0.9"/>
<path d="M89 400 L95 403.4 L113.5 409 L136.7 411.4 L147.2 421.8 L141.4 425.4 L102 427.6 L88 415 Z" fill="#c04848" fill-opacity="0.34" stroke="#8c1c1c" stroke-width="0.9"/>
<path d="M95 403.4 L124 419 M104 408 L136.7 411.4 M104 408 L147.2 421.8 M141.4 425.4 L95 403.4 M147.2 421.8 L141.4 425.4 M89 400 L102 427.6 M95 403.4 L113.5 409 M136.7 411.4 L130 423 M95 403.4 L89 400 M89 400 L88 415 M88 415 L113.5 409 M104 408 L110 415 M136.7 411.4 L88 415 M110 415 L136.7 411.4 M130 423 L113.5 409 M102 427.6 L104 408 M102 427.6 L95 403.4 M102 427.6 L102 427.6 M136.7 411.4 L89 400 M147.2 421.8 L124 419 M147.2 421.8 L89 400 M136.7 411.4 L113.5 409 M102 427.6 L124 419 M104 408 L124 419 M95 403.4 L89 400 M113.5 409 L136.7 411.4 M88 415 L147.2 421.8 M89 400 L124 419 M141.4 425.4 L147.2 421.8 M102 427.6 L95 403.4 M95 403.4 L95 403.4 M136.7 411.4 L124 419 M104 408 L136.7 411.4 M89 400 L124 419" stroke="#8a1818" stroke-width="0.7" fill="none" opacity="0.85"/>
<path d="M190.2 432.3 H209" stroke="#b03838" stroke-width="1"/><path d="M190.2 432.3 V458" stroke="#2a2a78" stroke-width="1"/>
</svg>
<div class="vpicon"></div><div class="vplabel">Top</div>
</div>
<div id="vp3d" class="abs vp" style="left:213px;top:248.4px;width:382.7px;height:238px;background:#000;">
<svg width="382.7" height="238" viewBox="213 248.4 382.7 238" style="position:absolute;left:0;top:0;filter:blur(0.45px);">
<defs><radialGradient id="tire" cx="0.46" cy="0.5" r="0.52"><stop offset="0" stop-color="#fff"/><stop offset="0.6" stop-color="#fbfbfb"/><stop offset="0.8" stop-color="#ececec"/><stop offset="0.93" stop-color="#d6d6d6"/><stop offset="1" stop-color="#bcbcbc"/></radialGradient></defs>
<path d="M487.4 348.4 L514.0 354.0 L542.0 361.8 L564.4 368.0 L570.0 370.4 L568.6 382.6 L553.0 378.0 L528.0 371.4 L503.0 365.8 L474.8 361.0 Z" fill="#7e7e7e"/>
<path d="M474.8 361.0 L471.6 360.4 L460.2 370.8 L450.6 416.2 L462.6 419.4 L467.0 409.0 L472.0 403.0 L481.0 397.0 L494.4 393.2 L508.0 393.0 L522.4 397.4 L533.0 404.0 L542.0 412.8 L548.0 424.0 L551.8 435.2 L554.6 432.4 L558.9 419.8 L567.3 419.8 L570.0 411.4 L574.3 407.2 L572.9 400.2 L575.7 387.6 L568.6 382.6 Z" fill="#fff"/>
<ellipse cx="505.8" cy="436.2" rx="35.4" ry="33.8" fill="url(#tire)" transform="rotate(-20 505.8 436.2)"/>
<ellipse cx="505.20000000000005" cy="437.8" rx="22" ry="19" fill="#fff"/>
<path d="M498.2 433.5 L485.1 431.4 L486.5 429.0 L488.3 426.8 L490.5 424.9 L493.0 423.3 L495.7 422.1 Z" fill="#000"/><path d="M503.9 429.8 L501.9 421.5 L502.9 421.5 L503.8 421.5 L504.7 421.5 L505.7 421.6 L506.6 421.7 Z" fill="#000"/><path d="M509.0 433.5 L511.5 422.1 L514.2 423.3 L516.7 424.9 L518.9 426.8 L520.7 429.0 L522.1 431.4 Z" fill="#000"/><path d="M511.3 438.8 L523.0 433.7 L523.6 436.1 L523.7 438.5 L523.5 440.9 L522.8 443.3 L521.8 445.6 Z" fill="#000"/><path d="M508.3 444.0 L519.1 448.7 L517.6 450.3 L515.8 451.6 L513.9 452.8 L511.9 453.7 L509.7 454.5 Z" fill="#000"/><path d="M503.3 446.6 L505.3 454.9 L504.3 454.9 L503.4 454.9 L502.5 454.9 L501.5 454.8 L500.6 454.7 Z" fill="#000"/><path d="M497.8 443.2 L494.4 453.3 L492.4 452.3 L490.5 451.0 L488.9 449.6 L487.4 448.0 L486.2 446.2 Z" fill="#000"/><path d="M495.9 437.6 L483.8 441.2 L483.5 439.4 L483.5 437.6 L483.7 435.8 L484.1 434.0 L484.7 432.2 Z" fill="#000"/>
<ellipse cx="503.6" cy="438.2" rx="2.4" ry="2.4" fill="#000"/>
<path d="M408.6 362.8 L410.4 362.6 L408.2 380.4 L405.8 380.4 Z" fill="#fff"/>
</svg><div class="vpicon" style="background:#e6e6f4;left:2.2px;top:2.2px;width:9px;height:8.4px;"></div></div>

</body>
</html>
